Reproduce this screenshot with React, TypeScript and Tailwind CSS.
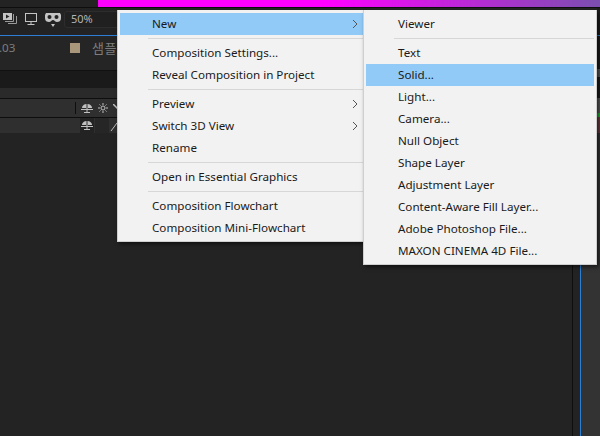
import React from 'react';

const font = 'font-["Noto_Sans","Liberation_Sans",sans-serif]';

type Item = { label?: string; arrow?: boolean; active?: boolean; sep?: boolean };

const mainItems: Item[] = [
  { label: 'New', arrow: true, active: true },
  { sep: true },
  { label: 'Composition Settings...' },
  { label: 'Reveal Composition in Project' },
  { sep: true },
  { label: 'Preview', arrow: true },
  { label: 'Switch 3D View', arrow: true },
  { label: 'Rename' },
  { sep: true },
  { label: 'Open in Essential Graphics' },
  { sep: true },
  { label: 'Composition Flowchart' },
  { label: 'Composition Mini-Flowchart' },
];

const newItems: Item[] = [
  { label: 'Viewer' },
  { sep: true },
  { label: 'Text' },
  { label: 'Solid...', active: true },
  { label: 'Light...' },
  { label: 'Camera...' },
  { label: 'Null Object' },
  { label: 'Shape Layer' },
  { label: 'Adjustment Layer' },
  { label: 'Content-Aware Fill Layer...' },
  { label: 'Adobe Photoshop File...' },
  { label: 'MAXON CINEMA 4D File...' },
];

const Chevron = () => (
  <svg width="6" height="10" viewBox="0 0 6 10" fill="none" className="shrink-0">
    <path d="M1 1l4 4-4 4" stroke="#555" strokeWidth="1" />
  </svg>
);

const Menu = ({ items, className }: { items: Item[]; className: string }) => (
  <div className={`absolute bg-[#f2f2f2] pt-[3px] pb-[2px] px-[2px] border-x border-b border-[#cfcfcf] shadow-[2px_2px_4px_rgba(0,0,0,0.55)] ${font} ${className}`}>
    {items.map((item, i) =>
      item.sep ? (
        <div key={i} className="h-[7px] flex items-center pl-[28px]">
          <div className="h-px w-full bg-[#d7d7d7]" />
        </div>
      ) : (
        <div
          key={i}
          className={`h-[22px] flex items-center justify-between pl-[32px] pr-[6px] text-[11.65px] text-[#1a1a1a] ${item.active ? 'bg-[#91c9f7]' : ''}`}
        >
          <span>{item.label}</span>
          {item.arrow && <Chevron />}
        </div>
      ),
    )}
  </div>
);

const Toolbar = () => (
  <div className="h-[27px] bg-[#232323] flex items-start pl-[3px] pt-[5px] shrink-0">
    <svg width="14" height="11" viewBox="0 0 14 11" fill="none">
      <rect x="0" y="0" width="9" height="7" fill="#c4c4c4" />
      <path d="M3 1.500l3.500 2-3.500 2z" fill="#232323" />
      <path d="M10.500 1v7.500H2M13.500 3v7.500H5" stroke="#9a9a9a" />
    </svg>
    <svg width="12" height="12" viewBox="0 0 12 12" fill="none" className="ml-[8px]">
      <rect x="0.500" y="0.500" width="11" height="8" stroke="#c4c4c4" />
      <path d="M6 9v2M2.500 11.500h7" stroke="#c4c4c4" />
    </svg>
    <svg width="16" height="14" viewBox="0 0 16 14" fill="none" className="ml-[8px]">
      <path d="M1 0h14l1 2v3c0 3-2 4-4 4-2 0-2.500-2-4-2s-2 2-4 2c-2 0-4-1-4-4V2z" fill="#c4c4c4" />
      <circle cx="4.500" cy="4" r="2" fill="#232323" />
      <circle cx="11.500" cy="4" r="2" fill="#232323" />
      <path d="M6 11h4l-2 3z" fill="#c4c4c4" />
    </svg>
    <div className={`ml-[3px] -mt-[2px] w-[60px] h-[17px] border border-[#2d2d2d] rounded-[3px] bg-[#202020] flex items-center pl-[6px] text-[11px] text-[#b4b4b4] ${font}`}>
      50%
    </div>
  </div>
);

const SwitchIcon = () => (
  <svg width="12" height="11" viewBox="0 0 12 11" fill="none">
    <path d="M1 5c0-2.500 2.500-4 5-4s5 1.500 5 4z" fill="#c0c0c0" />
    <path d="M0 6.500h12M3 9.500h6M6 1v9" stroke="#c0c0c0" />
    <path d="M6 1v4" stroke="#2f2f2f" />
  </svg>
);

const App = () => (
  <div className="relative w-[600px] h-[436px] overflow-hidden bg-[#232323] flex flex-col">
    <div className="h-[7px] bg-[#232323] flex shrink-0">
      <div className="ml-[98px] flex-1 bg-[linear-gradient(90deg,#ff00ff_0%,#ff00ff_45%,#7b4fb0_100%)]" />
    </div>
    <div className="h-px bg-[#0e0e0e] shrink-0" />
    <div className="flex-1 flex min-h-0">
      <div className="w-[597px] flex flex-col">
        <Toolbar />
        <div className="h-px bg-[#2d7fd6] shrink-0" />
        <div className="h-[34px] bg-[#252525] flex items-center text-[11.65px] text-[#7d7d7d] shrink-0 pb-[10px]">
          <span className={`w-[70px] ${font} -ml-[1px]`}>.03</span>
          <div className="w-[10px] h-[10px] bg-[#a8977a] ml-[1px]" />
          <span className='ml-[12px] text-[13px] tracking-[0.5px] font-["Noto_Sans_CJK_KR",sans-serif]'>샘플</span>
        </div>
        <div className="h-px bg-[#111] shrink-0" />
        <div className="h-[17px] bg-[#1a1a1a] shrink-0" />
        <div className="h-[10px] bg-[#2a2a2a] shrink-0" />
        <div className="h-px bg-[#0e0e0e] shrink-0" />
        <div className="h-[18px] bg-[#2f2f2f] flex items-center pl-[75px] gap-[5px] shrink-0">
          <div className="w-px h-[12px] bg-[#0e0e0e]" />
          <SwitchIcon />
          <svg width="10" height="10" viewBox="0 0 10 10" fill="none">
            <circle cx="5" cy="5" r="2" stroke="#c0c0c0" />
            <path d="M5 0v2M5 8v2M0 5h2M8 5h2M1.500 1.500l1 1M7.500 7.500l1 1M8.500 1.500l-1 1M1.500 8.500l1-1" stroke="#c0c0c0" />
          </svg>
          <svg width="8" height="8" viewBox="0 0 8 8" fill="none">
            <path d="M0 0l8 8" stroke="#c0c0c0" strokeWidth="1.500" />
          </svg>
        </div>
        <div className="h-px bg-[#0e0e0e] shrink-0" />
        <div className="h-[15px] bg-[#2f2f2f] flex items-center pl-[80px] shrink-0">
          <div className="w-[14px] h-[15px] bg-[#232323] flex items-center justify-center">
            <SwitchIcon />
          </div>
          <div className="ml-[1px] w-[14px] h-[15px] bg-[#262626]" />
          <svg width="8" height="15" viewBox="0 0 8 15" fill="none" className="ml-[1px]">
            <path d="M1 13l6-8" stroke="#c0c0c0" />
          </svg>
        </div>
        <div className="flex-1 flex min-h-0">
          <div className="w-[572px] bg-[#232323]" />
          <div className="w-px bg-[#0e0e0e]" />
          <div className="w-[7px] bg-[#232323]" />
          <div className="w-px bg-[#2d7fd6]" />
          <div className="flex-1 bg-[#333333]" />
        </div>
      </div>
      <div className="flex-1 flex flex-col">
        <div className="h-[27px] bg-[#1c1c1c]" />
        <div className="h-px bg-[#2d7fd6]" />
        <div className="h-[33px] bg-[#1c1c1c]" />
        <div className="h-[8px] bg-[#555555]" />
        <div className="h-[21px] bg-[#1c1c1c]" />
        <div className="h-[15px] bg-[#555555]" />
        <div className="h-[4px] bg-[#22a836]" />
        <div className="h-[16px] bg-[#6a3a3e]" />
        <div className="flex-1 bg-[#333333]" />
      </div>
    </div>
    <Menu items={mainItems} className="left-[117px] top-[10px] w-[250px]" />
    <Menu items={newItems} className="left-[363px] top-[10px] w-[234px]" />
  </div>
);

export default App;
